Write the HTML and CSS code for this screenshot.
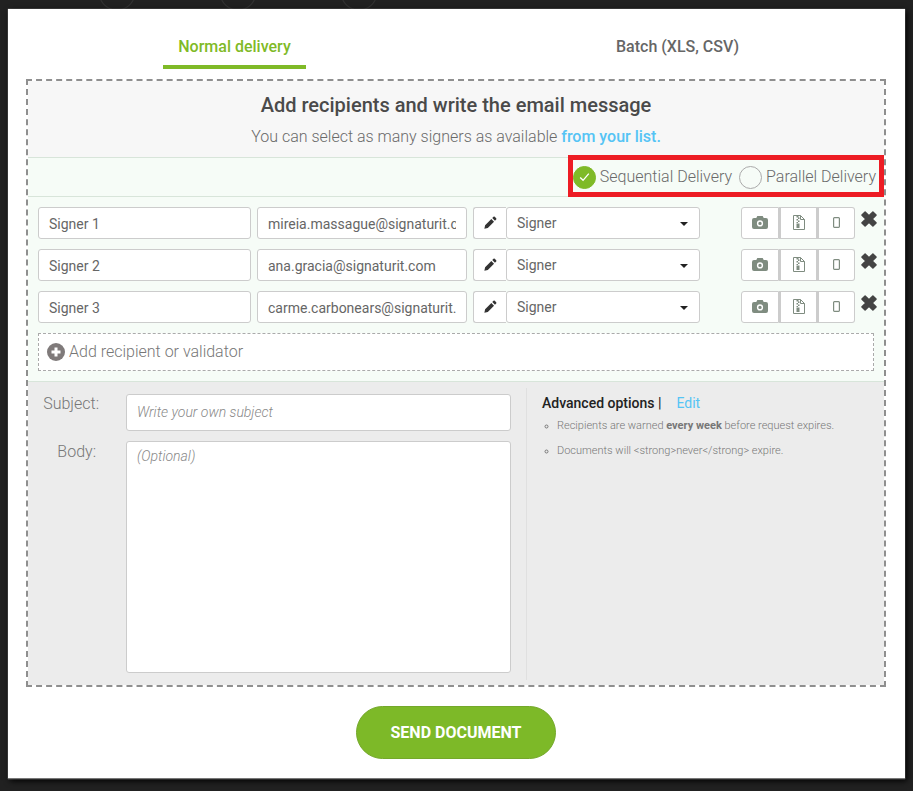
FILE: index.html
```html
<!DOCTYPE html>
<html lang="en">
<head>
<meta charset="utf-8">
<title>Send document</title>
<link rel="stylesheet" href="styles.css">
</head>
<body>
<svg class="defs" width="0" height="0" aria-hidden="true">
  <symbol id="i-pencil" viewBox="0 0 14 14"><path d="M10.2.9a1 1 0 0 1 1.4 0l1.500 1.500a1 1 0 0 1 0 1.400l-1.300 1.300-2.900-2.900zM7.900 3.200l2.900 2.900-6.700 6.700-3.700.8.8-3.700z"/></symbol>
  <symbol id="i-camera" viewBox="0 0 16 14"><path fill-rule="evenodd" d="M5.300 1h5.400l1 2H14a2 2 0 0 1 2 2v7a2 2 0 0 1-2 2H2a2 2 0 0 1-2-2V5a2 2 0 0 1 2-2h2.300zM8 5.300a3.100 3.100 0 1 0 0 6.200 3.100 3.100 0 0 0 0-6.200zm0 1.400a1.700 1.700 0 1 1 0 3.400 1.700 1.700 0 0 1 0-3.400z"/></symbol>
  <symbol id="i-zip" viewBox="0 0 12 15"><path fill="none" stroke="currentColor" d="M.5.500h7l4 4v10H.5zM7.500.5v4h4"/><path d="M3.500 1h2v1.500h-2zM5 2.500h1.500V4H5zM3.500 4H5v1.500H3.500zM5 5.500h1.500V7H5zM3.500 7H5v1H3.500zM3.500 8.500h3V13h-3z"/></symbol>
  <symbol id="i-phone" viewBox="0 0 7 11"><path fill="none" stroke="currentColor" stroke-width="1.200" d="M1.400.6h4.200a.8.8 0 0 1 .8.8v8.200a.8.8 0 0 1-.8.8H1.400a.8.8 0 0 1-.8-.8V1.400a.8.8 0 0 1 .8-.8z"/></symbol>
  <symbol id="i-x" viewBox="0 0 16 16"><path stroke="currentColor" stroke-width="1.500" stroke-linejoin="round" d="M8 4.900 11.900 1 15 4.100 11.100 8 15 11.900 11.900 15 8 11.100 4.100 15 1 11.900 4.900 8 1 4.100 4.100 1z"/></symbol>
</svg>
<main class="modal">
  <nav class="tabs">
    <a class="tab tab-active">Normal delivery</a>
    <a class="tab tab-batch">Batch (XLS, CSV)</a>
  </nav>
  <section class="box">
    <header class="head">
      <h1 class="title">Add recipients and write the email message</h1>
      <p class="sub">You can select as many signers as available <a class="link-strong">from your list.</a></p>
    </header>
    <div class="delivery">
      <div class="delivery-opts">
        <span class="radio radio-on"><svg viewBox="0 0 22 22" width="22" height="22"><path d="M6.500 11.500l3 3 6-7" fill="none" stroke="#fff" stroke-width="1.400"/></svg></span>
        <span class="opt-label">Sequential Delivery</span>
        <span class="radio"></span>
        <span class="opt-label">Parallel Delivery</span>
      </div>
      <div class="highlight"></div>
    </div>
    <div class="signers">
      <div class="row">
        <input class="field f-name" value="Signer 1">
        <input class="field f-mail" value="mireia.massague@signaturit.com">
        <span class="pencil"><svg width="13" height="13"><use href="#i-pencil"/></svg></span>
        <div class="select">Signer<i class="caret"></i></div>
        <div class="btns">
          <span class="btn"><svg width="16" height="14"><use href="#i-camera"/></svg></span>
          <span class="btn"><svg width="12" height="15"><use href="#i-zip"/></svg></span>
          <span class="btn"><svg width="7" height="11"><use href="#i-phone"/></svg></span>
        </div>
        <svg class="remove" width="16" height="16"><use href="#i-x"/></svg>
      </div>
      <div class="row">
        <input class="field f-name" value="Signer 2">
        <input class="field f-mail" value="ana.gracia@signaturit.com">
        <span class="pencil"><svg width="13" height="13"><use href="#i-pencil"/></svg></span>
        <div class="select">Signer<i class="caret"></i></div>
        <div class="btns">
          <span class="btn"><svg width="16" height="14"><use href="#i-camera"/></svg></span>
          <span class="btn"><svg width="12" height="15"><use href="#i-zip"/></svg></span>
          <span class="btn"><svg width="7" height="11"><use href="#i-phone"/></svg></span>
        </div>
        <svg class="remove" width="16" height="16"><use href="#i-x"/></svg>
      </div>
      <div class="row">
        <input class="field f-name" value="Signer 3">
        <input class="field f-mail" value="carme.carbonears@signaturit.com">
        <span class="pencil"><svg width="13" height="13"><use href="#i-pencil"/></svg></span>
        <div class="select">Signer<i class="caret"></i></div>
        <div class="btns">
          <span class="btn"><svg width="16" height="14"><use href="#i-camera"/></svg></span>
          <span class="btn"><svg width="12" height="15"><use href="#i-zip"/></svg></span>
          <span class="btn"><svg width="7" height="11"><use href="#i-phone"/></svg></span>
        </div>
        <svg class="remove" width="16" height="16"><use href="#i-x"/></svg>
      </div>
      <div class="add">
        <svg width="18" height="18" viewBox="0 0 18 18"><circle cx="9" cy="9" r="9" fill="#7f7a7a"/><path d="M9 4.500v9M4.500 9h9" stroke="#fff" stroke-width="3"/></svg>
        <span class="add-text">Add recipient or validator</span>
      </div>
    </div>
    <div class="compose">
      <div class="compose-left">
        <div class="c-row c-row-subject">
          <label class="c-label">Subject:</label>
          <input class="c-input" placeholder="Write your own subject">
        </div>
        <div class="c-row">
          <label class="c-label c-label-body">Body:</label>
          <textarea class="c-area" placeholder="(Optional)"></textarea>
        </div>
      </div>
      <aside class="compose-right">
        <h2 class="adv"><span>Advanced options |</span><a class="edit">Edit</a></h2>
        <ul class="adv-list">
          <li>Recipients are warned <b>every week</b> before request expires.</li>
          <li>Documents will &lt;strong&gt;never&lt;/strong&gt; expire.</li>
        </ul>
      </aside>
    </div>
  </section>
  <div class="actions"><button class="send">SEND DOCUMENT</button></div>
</main>
</body>
</html>
```
FILE: styles.css
```css
* { box-sizing: border-box; }
html, body { margin: 0; height: 100%; }
body {
  background-color: #212121;
  background-image:
    radial-gradient(circle at 117px -8px, transparent 17px, #333 18px, transparent 19px),
    radial-gradient(circle at 238px -8px, transparent 17px, #333 18px, transparent 19px),
    radial-gradient(circle at 359px -8px, transparent 17px, #333 18px, transparent 19px);
  padding: 9px 8px 12px;
  font-family: Roboto, "Liberation Sans", sans-serif;
  overflow: hidden;
}
.defs { position: absolute; }
.modal {
  width: 897px;
  height: 770px;
  background: #fff;
  padding: 0 19px 0 18px;
  border-bottom: 1px solid #777;
  box-shadow: 0 0 1px #bbb, 2px 2px 6px #000;
}
.tabs { display: flex; height: 70px; padding-left: 137px; }
.tab {
  font-size: 16px;
  font-weight: 500;
  line-height: 20px;
  padding-top: 28px;
  text-align: center;
}
.tab-active {
  width: 143px;
  height: 60px;
  color: #7fba27;
  border-bottom: 4px solid #7fba27;
}
.tab-batch { margin-left: 310px; color: #666; }
.box {
  width: 860px;
  height: 608px;
  border: 2px dashed #8f8f8f;
  display: flex;
  flex-direction: column;
}
.head { height: 76px; background: #f7f7f7; text-align: center; padding-top: 12px; }
.title { margin: 0; font-size: 20px; font-weight: 500; line-height: 24px; color: #4a4a4a; }
.sub { margin: 10px 0 0; font-size: 16px; font-weight: 300; line-height: 20px; color: #6a6a6a; }
.link-strong { color: #55c4f5; font-weight: 500; }
.delivery {
  position: relative;
  height: 40px;
  background: #f6fcf7;
  border-top: 1px solid #d8e5da;
  border-bottom: 1px solid #d8e5da;
  display: flex;
  justify-content: flex-end;
  align-items: center;
  padding-right: 8px;
}
.delivery-opts { display: flex; align-items: center; }
.radio {
  width: 23px;
  height: 23px;
  border-radius: 50%;
  border: 1px solid #aaa;
  margin-right: 4px;
  display: flex;
  align-items: center;
  justify-content: center;
}
.radio-on { background: #7fba27; border-color: #7fba27; }
.opt-label { font-size: 16px; font-weight: 300; color: #6a6a6a; margin: -2px 7px 0 0; }
.opt-label:last-child { margin-right: 0; }
.highlight {
  position: absolute;
  left: 540px;
  top: -3px;
  width: 316px;
  height: 42px;
  border: 5px solid #ed1c24;
  pointer-events: none;
}
.signers {
  height: 185px;
  background: #f6fcf7;
  border-bottom: 1px solid #d8e5da;
  padding: 10px 10px 0;
}
.row { display: flex; height: 32px; margin-bottom: 10px; align-items: stretch; }
.row > * { flex: none; }
.field {
  height: 32px;
  border: 1px solid #ccc;
  border-radius: 3px;
  background: #fff;
  font: 400 14px Roboto, sans-serif;
  color: #666;
  padding: 2px 10px 0;
  outline: none;
}
.f-name { width: 213px; margin-right: 6px; }
.f-mail { width: 210px; margin-right: 6px; }
.pencil {
  width: 33px;
  border: 1px solid #ccc;
  border-right: 0;
  border-radius: 3px 0 0 3px;
  background: #fff;
  display: flex;
  align-items: center;
  justify-content: center;
  fill: #333;
}
.pencil svg { margin-top: -2px; }
.select {
  position: relative;
  width: 194px;
  border: 1px solid #ccc;
  border-radius: 3px;
  background: #fff;
  font-size: 14px;
  color: #666;
  line-height: 30px;
  padding-left: 10px;
}
.caret {
  position: absolute;
  right: 11px;
  top: 14px;
  border: 4px solid transparent;
  border-top-color: #222;
  border-bottom: 0;
}
.btns { display: flex; margin-left: 41px; }
.btn {
  width: 38px;
  border: 1px solid #ccc;
  background: #fff;
  display: flex;
  align-items: center;
  justify-content: center;
  fill: #7f8c80;
  color: #7f8c80;
}
.btn + .btn { border-left-width: 2px; }
.btn:first-child { border-radius: 3px 0 0 3px; }
.btn:last-child { border-radius: 0 3px 3px 0; }
.btn svg { margin-top: -2px; }
.remove { margin: 4px 0 0 6px; fill: #444; color: #444; }
.add {
  display: flex;
  align-items: center;
  gap: 4px;
  width: 836px;
  height: 38px;
  background: #fff;
  border: 1px dashed #aaa;
  padding-left: 8px;
  font-size: 16px;
  font-weight: 300;
  color: #777;
}
.add-text { margin-top: -1px; }
.compose { flex: 1; background: #ececec; display: flex; padding-top: 6px; }
.compose-left { width: 499px; height: 292px; border-right: 1px solid #e0e0e0; padding-top: 6px; }
.c-row { display: flex; align-items: flex-start; }
.c-row-subject { margin-bottom: 10px; }
.c-label {
  width: 98px;
  padding: 0 27px 0 0;
  text-align: right;
  font-size: 16px;
  font-weight: 300;
  color: #777;
}
.c-label-body { padding: 1px 30px 0 0; }
.c-input, .c-area {
  width: 385px;
  border: 1px solid #ccc;
  border-radius: 3px;
  background: #fff;
  font: italic 300 14px Roboto, sans-serif;
  padding: 0 10px 2px;
  outline: none;
  resize: none;
  display: block;
}
.c-input { height: 37px; }
.c-area { height: 232px; padding-top: 6px; }
.c-input::placeholder, .c-area::placeholder { color: #888; opacity: 1; }
.compose-right { padding: 7px 0 0 15px; }
.adv {
  margin: 0;
  display: flex;
  font-size: 14px;
  font-weight: 500;
  line-height: 16px;
  color: #222;
}
.edit { margin-left: 15px; color: #55c4f5; font-weight: 400; }
.adv-list {
  margin: 8px 0 0;
  padding: 0 0 0 15px;
  list-style: circle;
  font-size: 11px;
  font-weight: 300;
  color: #777;
}
.adv-list li { line-height: 14px; margin-bottom: 11px; }
.adv-list li::marker { font-size: 9px; }
.adv-list b { font-weight: 700; color: #777; }
.actions { display: flex; justify-content: center; padding-top: 19px; }
.send {
  width: 200px;
  height: 53px;
  border: 1px solid #74a82b;
  border-radius: 27px;
  background: #7db928;
  color: #fff;
  font: 700 16px Roboto, sans-serif;
  padding: 0;
}
```
